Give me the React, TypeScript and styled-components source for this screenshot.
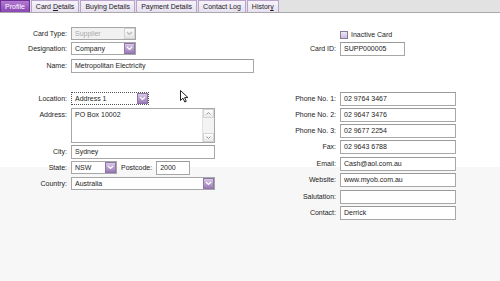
import styled, { createGlobalStyle } from 'styled-components';

const GlobalStyle = createGlobalStyle`
  html, body {
    margin: 0;
    padding: 0;
  }
  body {
    font-family: "Liberation Sans", Arial, sans-serif;
    font-size: 7px;
    color: #1c1c1c;
    background: #f7f7f7;
  }
`;

const Page = styled.div`
  position: relative;
  width: 500px;
  height: 281px;
  overflow: hidden;
  background: #f7f7f7;
`;

const TabBar = styled.div`
  display: flex;
  height: 12px;
  background: #e2e2e2;
  border-bottom: 1px solid #a9a9a9;
`;

const Tab = styled.div<{ $active?: boolean }>`
  display: flex;
  align-items: center;
  padding: 0 4px;
  margin-right: 1px;
  height: 12px;
  box-sizing: border-box;
  border: 1px solid ${(p) => (p.$active ? '#6c2f93' : '#b8a3cb')};
  border-bottom: none;
  background: ${(p) =>
    p.$active
      ? 'linear-gradient(#b27ad2, #8a48b4)'
      : 'linear-gradient(#f6f2fa, #e8e0f0)'};
  color: ${(p) => (p.$active ? '#ffffff' : '#1c1c1c')};
  white-space: pre;

  u {
    text-decoration: underline;
  }
`;

const Body = styled.div`
  display: flex;
  height: 268px;
  background: linear-gradient(#ffffff 0, #ffffff 154px, #f7f7f7 154px);
`;

const Column = styled.div<{ $width?: number; $label: number }>`
  display: flex;
  flex-direction: column;
  width: ${(p) => (p.$width ? `${p.$width}px` : 'auto')};
  flex: ${(p) => (p.$width ? 'none' : '1')};
  --label: ${(p) => p.$label}px;
`;

const Row = styled.div<{ $mt: number; $h?: number }>`
  display: flex;
  align-items: flex-start;
  gap: 4px;
  margin-top: ${(p) => p.$mt}px;
  height: ${(p) => p.$h ?? 14}px;
`;

const Label = styled.div<{ $auto?: boolean }>`
  width: ${(p) => (p.$auto ? 'auto' : 'var(--label)')};
  text-align: right;
  line-height: 14px;
  white-space: nowrap;
  flex: none;
`;

const Input = styled.div<{ $w: number; $h?: number }>`
  width: ${(p) => p.$w}px;
  height: ${(p) => p.$h ?? 14}px;
  box-sizing: border-box;
  border: 1px solid #a7a7a7;
  border-top-color: #9a9a9a;
  background: #ffffff;
  padding: 0 3px;
  line-height: 12px;
  white-space: nowrap;
  overflow: hidden;
  flex: none;
`;

const Select = styled.div<{ $w: number; $disabled?: boolean; $focus?: boolean }>`
  display: flex;
  width: ${(p) => p.$w}px;
  height: 13px;
  box-sizing: border-box;
  border: 1px ${(p) => (p.$focus ? 'dotted #555555' : 'solid #a7a7a7')};
  background: ${(p) => (p.$disabled ? '#f1f1f1' : '#ffffff')};
  color: ${(p) => (p.$disabled ? '#a9a9a9' : '#1c1c1c')};
  flex: none;
`;

const SelectText = styled.div`
  flex: 1;
  padding: 0 3px;
  line-height: 11px;
  white-space: nowrap;
  overflow: hidden;
`;

const ArrowBox = styled.div<{ $disabled?: boolean }>`
  display: flex;
  align-items: center;
  justify-content: center;
  width: 11px;
  height: 11px;
  box-sizing: border-box;
  border: 1px solid ${(p) => (p.$disabled ? '#d2d2d2' : '#8f73a9')};
  background: ${(p) =>
    p.$disabled
      ? 'linear-gradient(#fafafa, #e6e6e6)'
      : 'linear-gradient(#d9c9e8, #9a7bb6)'};
`;

const TextArea = styled.div<{ $w: number; $h: number }>`
  display: flex;
  width: ${(p) => p.$w}px;
  height: ${(p) => p.$h}px;
  box-sizing: border-box;
  border: 1px solid #a7a7a7;
  background: #ffffff;
  flex: none;
`;

const AreaText = styled.div`
  flex: 1;
  padding: 1px 3px;
  line-height: 9px;
`;

const ScrollBar = styled.div`
  display: flex;
  flex-direction: column;
  justify-content: space-between;
  width: 11px;
  background: #f3f3f3;
  border-left: 1px solid #e2e2e2;
`;

const ScrollButton = styled.div`
  display: flex;
  align-items: center;
  justify-content: center;
  height: 9px;
  box-sizing: border-box;
  border: 1px solid #d4d4d4;
  background: linear-gradient(#fdfdfd, #e9e9e9);
`;

const CheckRow = styled.div<{ $mt: number }>`
  display: flex;
  align-items: center;
  gap: 3px;
  margin-top: ${(p) => p.$mt}px;
  margin-left: calc(var(--label) + 4px);
  height: 11px;
`;

const CheckBox = styled.div`
  width: 8px;
  height: 8px;
  box-sizing: border-box;
  border: 1px solid #8b78a0;
  background: linear-gradient(#efe9f5, #c9bcd8);
`;

const Cursor = styled.svg`
  position: absolute;
  left: 180px;
  top: 90px;
`;

function Chevron({ color }: { color: string }) {
  return (
    <svg width="7" height="5" viewBox="0 0 7 5">
      <path d="M1 1 L3.5 3.5 L6 1" fill="none" stroke={color} strokeWidth="1.2" />
    </svg>
  );
}

function Dropdown({
  w,
  value,
  disabled,
  focus,
}: {
  w: number;
  value: string;
  disabled?: boolean;
  focus?: boolean;
}) {
  return (
    <Select $w={w} $disabled={disabled} $focus={focus}>
      <SelectText>{value}</SelectText>
      <ArrowBox $disabled={disabled}>
        <Chevron color={disabled ? '#b9b9b9' : '#ffffff'} />
      </ArrowBox>
    </Select>
  );
}

// label text, index of the underlined access key (-1 = none)
const tabs: [string, number][] = [
  ['Profile', -1],
  ['Card Details', 5],
  ['Buying Details', -1],
  ['Payment Details', -1],
  ['Contact Log', -1],
  ['History', 6],
];

const rightFields: [string, string, number][] = [
  ['Phone No. 1:', '02 9764 3467', 36],
  ['Phone No. 2:', '02 9647 3476', 2],
  ['Phone No. 3:', '02 9677 2254', 2],
  ['Fax:', '02 9643 6788', 2],
  ['Email:', 'Cash@aol.com.au', 3],
  ['Website:', 'www.myob.com.au', 2],
  ['Salutation:', '', 3],
  ['Contact:', 'Derrick', 2],
];

export default function App() {
  return (
    <Page>
      <GlobalStyle />
      <TabBar>
        {tabs.map(([t, k], i) => (
          <Tab key={t} $active={i === 0}>
            <span>
              {k < 0 ? (
                t
              ) : (
                <>
                  {t.slice(0, k)}
                  <u>{t[k]}</u>
                  {t.slice(k + 1)}
                </>
              )}
            </span>
          </Tab>
        ))}
      </TabBar>
      <Body>
        <Column $width={260} $label={67}>
          <Row $mt={14} $h={13}>
            <Label>Card Type:</Label>
            <Dropdown w={65} value="Supplier" disabled />
          </Row>
          <Row $mt={2} $h={13}>
            <Label>Designation:</Label>
            <Dropdown w={65} value="Company" />
          </Row>
          <Row $mt={4}>
            <Label>Name:</Label>
            <Input $w={183}>Metropolitan Electricity</Input>
          </Row>
          <Row $mt={19} $h={13}>
            <Label>Location:</Label>
            <Dropdown w={78} value="Address 1" focus />
          </Row>
          <Row $mt={3} $h={35}>
            <Label>Address:</Label>
            <TextArea $w={144} $h={35}>
              <AreaText>PO Box 10002</AreaText>
              <ScrollBar>
                <ScrollButton>
                  <svg width="5" height="3" viewBox="0 0 5 3">
                    <path d="M0.5 2.5 L2.5 0.5 L4.5 2.5" fill="none" stroke="#9a9a9a" />
                  </svg>
                </ScrollButton>
                <ScrollButton>
                  <svg width="5" height="3" viewBox="0 0 5 3">
                    <path d="M0.5 0.5 L2.5 2.5 L4.5 0.5" fill="none" stroke="#9a9a9a" />
                  </svg>
                </ScrollButton>
              </ScrollBar>
            </TextArea>
          </Row>
          <Row $mt={2}>
            <Label>City:</Label>
            <Input $w={144}>Sydney</Input>
          </Row>
          <Row $mt={2}>
            <Label>State:</Label>
            <Dropdown w={46} value="NSW" />
            <Label $auto>Postcode:</Label>
            <Input $w={34}>2000</Input>
          </Row>
          <Row $mt={2} $h={13}>
            <Label>Country:</Label>
            <Dropdown w={144} value="Australia" />
          </Row>
        </Column>
        <Column $label={76}>
          <CheckRow $mt={16}>
            <CheckBox />
            <span>Inactive Card</span>
          </CheckRow>
          <Row $mt={2}>
            <Label>Card ID:</Label>
            <Input $w={65}>SUPP000005</Input>
          </Row>
          {rightFields.map(([label, value, mt]) => (
            <Row key={label} $mt={mt}>
              <Label>{label}</Label>
              <Input $w={116}>{value}</Input>
            </Row>
          ))}
        </Column>
      </Body>
      <Cursor width="9" height="13" viewBox="0 0 9 13">
        <path
          d="M0.5 0.5 L0.5 10.5 L3 8.2 L4.8 12 L6.3 11.3 L4.6 7.6 L8 7.6 Z"
          fill="#ffffff"
          stroke="#222222"
          strokeWidth="1"
          strokeLinejoin="round"
        />
      </Cursor>
    </Page>
  );
}
